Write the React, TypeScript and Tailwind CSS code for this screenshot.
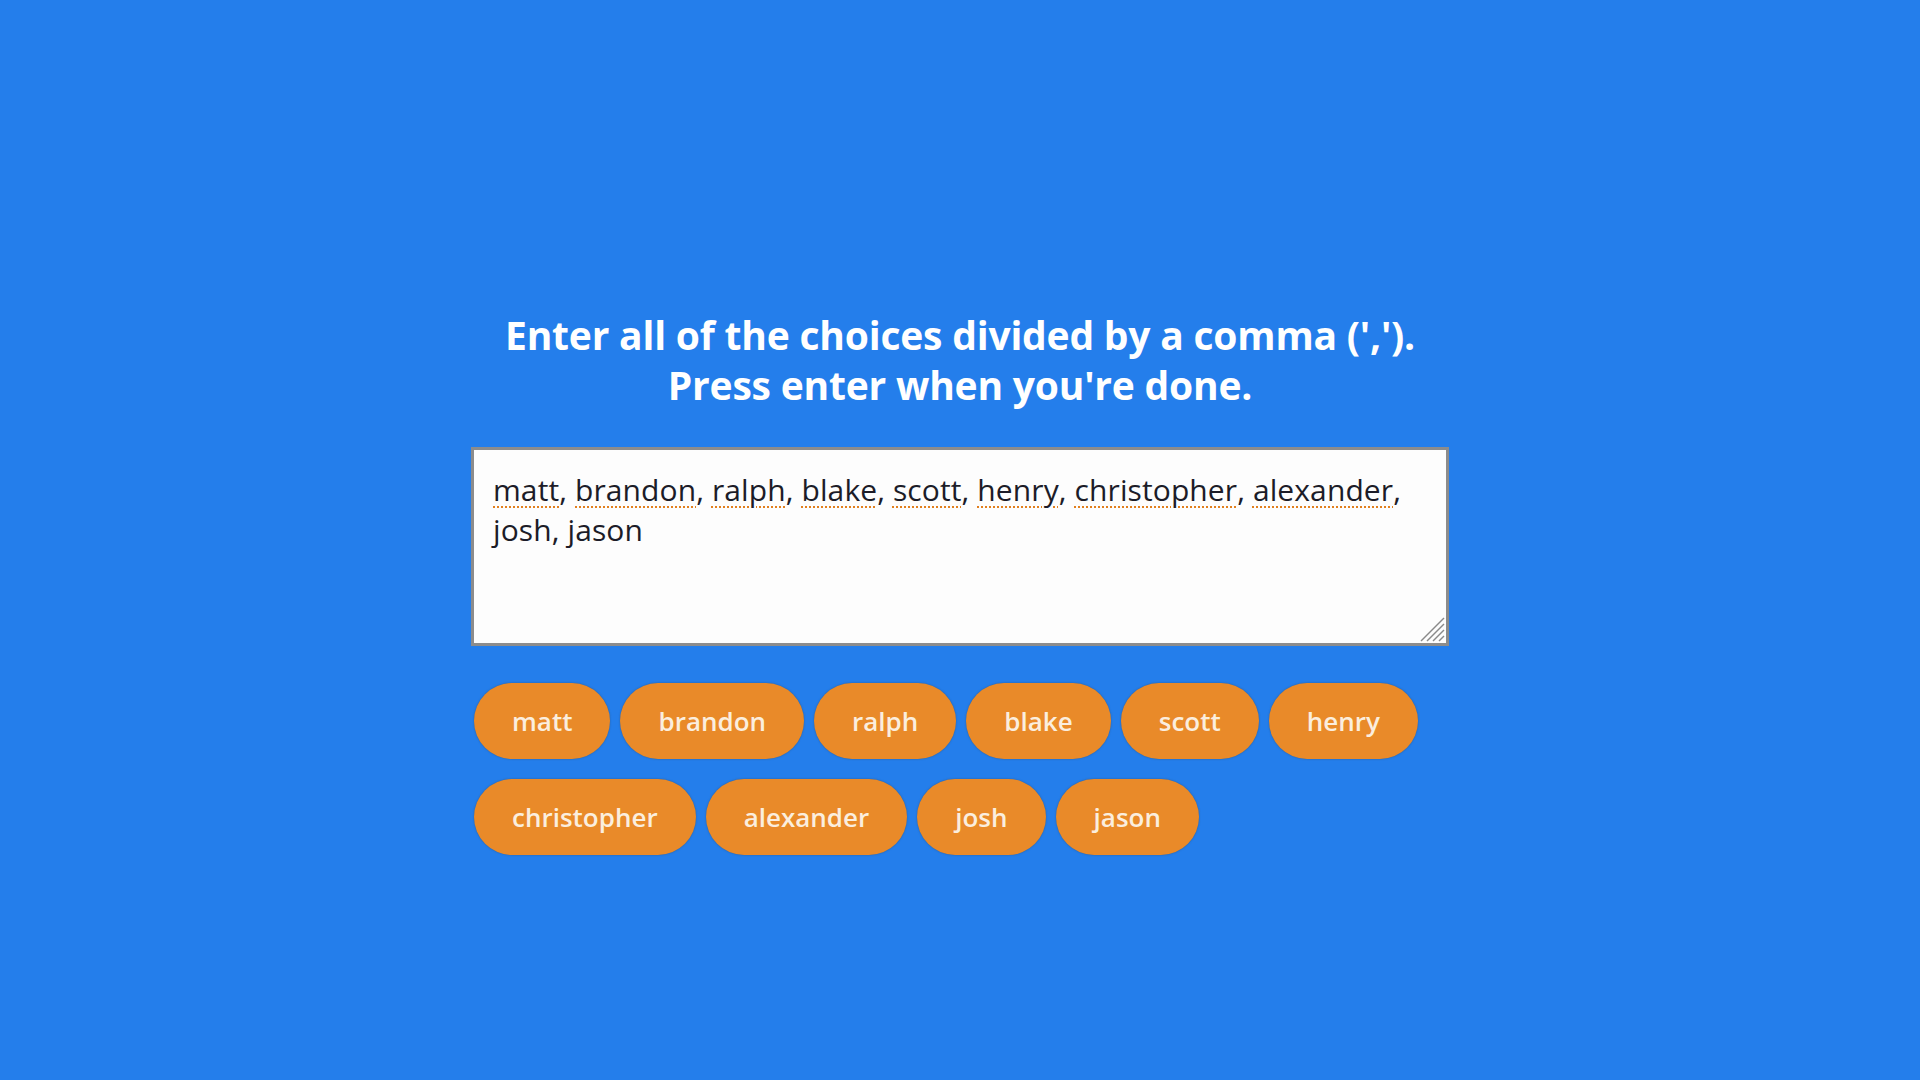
import React from "react";

const names = ["matt", "brandon", "ralph", "blake", "scott", "henry", "christopher", "alexander", "josh", "jason"];

export default function App() {
  const font = { fontFamily: "'Open Sans', Lato, sans-serif" };
  return (
    <div className="w-full h-[1080px] bg-[#247eeb] flex flex-col items-center" style={font}>
      <div className="mt-[310px] text-center text-white font-bold text-[39px] leading-[50px] tracking-[-0.2px]">
        <div>Enter all of the choices divided by a comma (',').</div>
        <div>Press enter when you're done.</div>
      </div>
      <div className="mt-[37px] w-[978px]">
        <div className="relative h-[199px] bg-[#fdfdfd] border-[3px] border-[#8c8c8c] pl-[19px] pr-[20px] pt-[20px] text-[30px] leading-[40px] text-[#1c1c28] tracking-[0.1px]">
          {names.map((n, i) => (
            <React.Fragment key={n}>
              {n === "josh" || n === "jason" ? (
                <span>{n}</span>
              ) : (
                <span className="underline decoration-dotted decoration-[#e2801e] decoration-2 underline-offset-[5px]">{n}</span>
              )}
              {i < names.length - 1 ? ", " : ""}
            </React.Fragment>
          ))}
          <svg className="absolute right-[1px] bottom-[1px]" width="26" height="26" viewBox="0 0 26 26">
            <line x1="25" y1="2" x2="2" y2="25" stroke="#8a8a8a" strokeWidth="1.5" />
            <line x1="25" y1="8" x2="8" y2="25" stroke="#8a8a8a" strokeWidth="1.5" />
            <line x1="25" y1="14" x2="14" y2="25" stroke="#8a8a8a" strokeWidth="1.5" />
            <line x1="25" y1="20" x2="20" y2="25" stroke="#8a8a8a" strokeWidth="1.5" />
          </svg>
        </div>
        <div className="mt-[37px] flex flex-wrap gap-x-[10px] gap-y-[20px] pl-[3px]">
          {names.map((n) => (
            <div
              key={n}
              className="h-[76px] px-[38px] rounded-full bg-[#e98a29] text-[#fbeede] text-[26px] font-semibold flex items-center shadow-[0_0_2px_rgba(60,60,60,0.5)]"
            >
              {n}
            </div>
          ))}
        </div>
      </div>
    </div>
  );
}
